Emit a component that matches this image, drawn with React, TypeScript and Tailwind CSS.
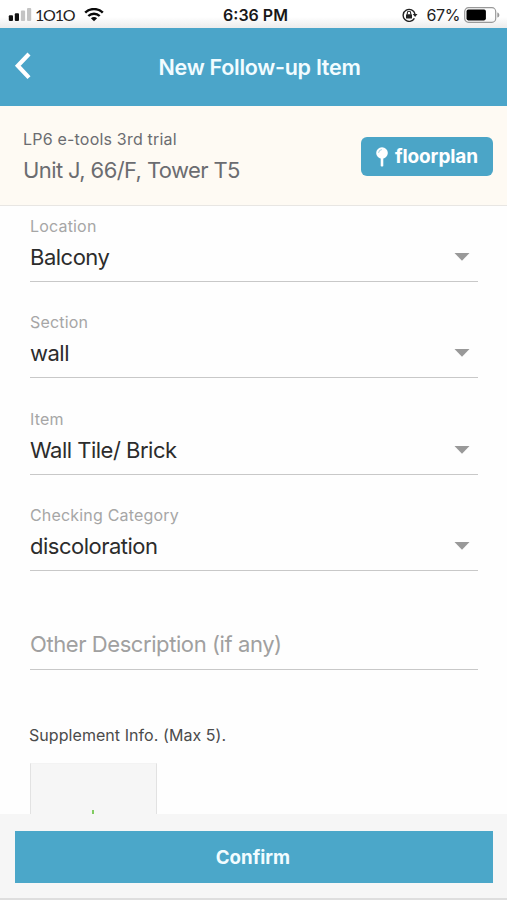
interface Field {
  label: string;
  value: string;
}

const fields: Field[] = [
  { label: "Location", value: "Balcony" },
  { label: "Section", value: "wall" },
  { label: "Item", value: "Wall Tile/ Brick" },
  { label: "Checking Category", value: "discoloration" },
];

function StatusBar() {
  return (
    <div className="grid h-7 shrink-0 grid-cols-3 items-center bg-linear-to-b from-white from-60% to-[#ececec] pl-2 pr-2 pt-0.5">
      <div className="flex items-center">
        <svg width="24" height="14" viewBox="0 0 24 14">
          <rect x="0.8" y="7.2" width="4.2" height="5.8" rx="1" fill="#111" />
          <rect x="6.8" y="5.2" width="4.2" height="7.8" rx="1" fill="#111" />
          <rect x="12.9" y="2.6" width="4.2" height="10.4" rx="1" fill="#c4c4c4" />
          <rect x="19" y="0" width="4.2" height="13" rx="1" fill="#c4c4c4" />
        </svg>
        <span className="ml-[3px] w-10 whitespace-nowrap font-['Lato',sans-serif] text-base leading-5 tracking-[-1.2px] text-[#222]">
          1O1O
        </span>
        <svg className="ml-[9px]" width="20" height="14" viewBox="0 0 20 14" fill="none" stroke="#0a0a0a">
          <path d="M1.2 4.7C6 -0.1 14 -0.1 18.8 4.7" strokeWidth="2.5" />
          <path d="M4.3 8C7.5 4.9 12.5 4.9 15.7 8" strokeWidth="2.4" />
          <path d="M10 13.2L6.9 10.2C8.7 8.5 11.3 8.5 13.1 10.2Z" fill="#0a0a0a" stroke="none" />
        </svg>
      </div>
      <div className="whitespace-nowrap pl-1 text-center text-base font-semibold leading-5 text-[#181818]">
        6:36 PM
      </div>
      <div className="flex items-center justify-end">
        <svg width="16" height="14" viewBox="0 0 16 14" fill="none" stroke="#222">
          <path d="M12.4 10.3A6 6 0 1 1 13 6" strokeWidth="1.4" />
          <path d="M10.7 6H15.5L13.1 9Z" fill="#222" stroke="none" />
          <rect x="4" y="6.2" width="6" height="4.4" rx="0.6" fill="#222" stroke="none" />
          <path d="M5.3 6.5V5a1.7 1.7 0 0 1 3.4 0v1.5" strokeWidth="1.1" />
        </svg>
        <span className="ml-[9px] text-base leading-5 tracking-[-0.4px] text-[#222]">67%</span>
        <svg className="-mr-px ml-1" width="36" height="16" viewBox="0 0 36 16">
          <rect x="0.7" y="0.7" width="31" height="14.6" rx="3.8" fill="none" stroke="#999" strokeWidth="1.2" />
          <rect x="2.5" y="2.6" width="19.4" height="10.8" rx="1.8" fill="#000" />
          <path d="M33.3 5.4C36 6 36 10 33.3 10.6Z" fill="#999" />
        </svg>
      </div>
    </div>
  );
}

function SelectField({ label, value }: Field) {
  return (
    <div className="mb-[20.4px] h-[76px] border-b border-[#c8c8c8]">
      <div className="pt-[10px] text-base leading-5 tracking-[0.18px] text-[#a6a6a6]">{label}</div>
      <div className="mt-[7px] flex items-center justify-between pr-2">
        <span className="text-[22px] leading-7 tracking-[-0.5px] text-[#2c2c2c]">{value}</span>
        <svg width="16" height="8" viewBox="0 0 16 8">
          <path d="M0.5 0H15.5L8 7.8Z" fill="#999" />
        </svg>
      </div>
    </div>
  );
}

export default function App() {
  return (
    <div className="flex h-[900px] w-[507px] flex-col overflow-hidden bg-[#fefefe] font-['Inter',sans-serif]">
      <StatusBar />

      <header className="grid h-[78px] shrink-0 grid-cols-[80px_1fr_80px] items-center bg-[#4ba5c9]">
        <button className="-mt-0.5 pl-[14px]" aria-label="Back">
          <svg width="17" height="28" viewBox="0 0 17 28" fill="none">
            <path d="M15 2L3.8 13.8L15 25.6" stroke="#fff" strokeWidth="4.2" />
          </svg>
        </button>
        <h1 className="whitespace-nowrap pl-3 text-center text-[21.5px] font-semibold leading-7 tracking-[-0.28px] text-[#f2fcff]">
          New Follow-up Item
        </h1>
      </header>

      <section className="flex h-[100px] shrink-0 items-center justify-between border-b border-[#e8e6e3] bg-[#fefaf3] pl-[23px] pr-3.5">
        <div className="text-[#6b6c70]">
          <p className="mt-px text-base leading-6 tracking-[0.2px]">LP6 e-tools 3rd trial</p>
          <p className="mt-[3px] text-[22px] leading-8 tracking-[-0.6px]">Unit J, 66/F, Tower T5</p>
        </div>
        <button className="mt-0.5 flex h-[39px] w-[132px] items-center justify-center rounded-md bg-[#4ba5c7] text-white">
          <svg width="12" height="20" viewBox="0 0 12 20">
            <rect x="4.7" y="10" width="2.6" height="9.5" rx="0.8" fill="#fff" />
            <circle cx="6" cy="6" r="5.8" fill="#fff" />
            <path d="M2.6 5.8A3.5 3.5 0 0 1 5.8 2.6" fill="none" stroke="#9bcfe2" strokeWidth="1" />
          </svg>
          <span className="ml-[7px] text-[19px] font-bold leading-6 tracking-[-0.1px]">floorplan</span>
        </button>
      </section>

      <main className="min-h-0 flex-1 overflow-hidden px-[30px] pr-[29px]">
        {fields.map((field) => (
          <SelectField key={field.label} label={field.label} value={field.value} />
        ))}

        <div className="flex h-[78px] items-end border-b border-[#c8c8c8] pb-[11px] text-[22px] leading-7 tracking-[-0.42px] text-[#a0a0a0]">
          Other Description (if any)
        </div>

        <div className="-ml-px mt-[53.4px] text-base leading-6 tracking-[0.06px] text-[#4b4b4b]">
          Supplement Info. (Max 5).
        </div>
        <div className="mt-4 flex h-[127px] w-[127px] justify-center border border-[#e2e2e2] border-t-[#f3f3f3] bg-[#f6f6f6] pt-[46px] pr-0.5">
          <div className="h-8 w-0.5 bg-[#82cc62]" />
        </div>
      </main>

      <footer className="h-[86px] shrink-0 border-b-2 border-[#dedede] bg-[#f6f6f6] px-[15px] pr-3.5 pt-[17px]">
        <button className="h-[52px] w-full bg-[#4ba7c9] pr-0.5 pt-0.5 text-[18.7px] font-bold text-[#f2fcff]">
          Confirm
        </button>
      </footer>
    </div>
  );
}
